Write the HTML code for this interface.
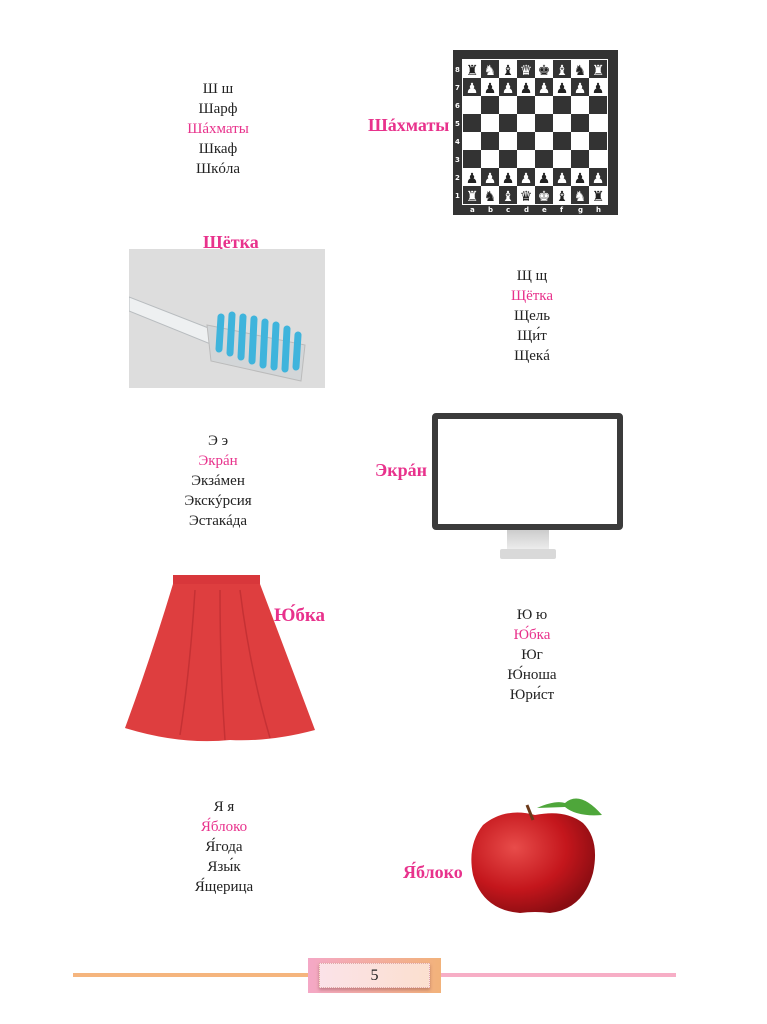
<!DOCTYPE html>
<html><head><meta charset="utf-8">
<style>
body{margin:0;width:767px;height:1024px;background:#fff;position:relative;overflow:hidden;font-family:"Liberation Serif",serif;}
.lst{position:absolute;width:200px;text-align:center;font-size:15px;line-height:20px;color:#222;}
.p{color:#e8328c;}
.lb{position:absolute;color:#e8328c;font-weight:bold;font-size:18px;line-height:20px;white-space:nowrap;}
.abs{position:absolute;}
</style></head><body>

<div class="lst" style="left:118px;top:79px">Ш ш<br>Шарф<br><span class="p">Шáхматы</span><br>Шкаф<br>Шкóла</div>
<div class="lb" style="left:368px;top:115px">Шáхматы</div>

<svg class="abs" style="left:453px;top:50px" width="165" height="165" viewBox="0 0 165 165">
<rect width="165" height="165" fill="#333"/>
<rect x="9" y="9" width="146" height="146" fill="#fff"/>
<g fill="#333">
<rect x="28" y="10" width="18" height="18"/><rect x="64" y="10" width="18" height="18"/><rect x="100" y="10" width="18" height="18"/><rect x="136" y="10" width="18" height="18"/>
<rect x="10" y="28" width="18" height="18"/><rect x="46" y="28" width="18" height="18"/><rect x="82" y="28" width="18" height="18"/><rect x="118" y="28" width="18" height="18"/>
<rect x="28" y="46" width="18" height="18"/><rect x="64" y="46" width="18" height="18"/><rect x="100" y="46" width="18" height="18"/><rect x="136" y="46" width="18" height="18"/>
<rect x="10" y="64" width="18" height="18"/><rect x="46" y="64" width="18" height="18"/><rect x="82" y="64" width="18" height="18"/><rect x="118" y="64" width="18" height="18"/>
<rect x="28" y="82" width="18" height="18"/><rect x="64" y="82" width="18" height="18"/><rect x="100" y="82" width="18" height="18"/><rect x="136" y="82" width="18" height="18"/>
<rect x="10" y="100" width="18" height="18"/><rect x="46" y="100" width="18" height="18"/><rect x="82" y="100" width="18" height="18"/><rect x="118" y="100" width="18" height="18"/>
<rect x="28" y="118" width="18" height="18"/><rect x="64" y="118" width="18" height="18"/><rect x="100" y="118" width="18" height="18"/><rect x="136" y="118" width="18" height="18"/>
<rect x="10" y="136" width="18" height="18"/><rect x="46" y="136" width="18" height="18"/><rect x="82" y="136" width="18" height="18"/><rect x="118" y="136" width="18" height="18"/>
</g>
<g font-family="DejaVu Sans" font-size="7" fill="#fff" font-weight="bold">
<text x="2" y="22">8</text><text x="2" y="40">7</text><text x="2" y="58">6</text><text x="2" y="76">5</text><text x="2" y="94">4</text><text x="2" y="112">3</text><text x="2" y="130">2</text><text x="2" y="148">1</text>
<text x="17" y="162">a</text><text x="35" y="162">b</text><text x="53" y="162">c</text><text x="71" y="162">d</text><text x="89" y="162">e</text><text x="107" y="162">f</text><text x="125" y="162">g</text><text x="143" y="162">h</text>
</g>
<g font-family="DejaVu Sans" font-size="14" text-anchor="middle">
<text x="19" y="25" fill="#222">♜</text><text x="37" y="25" fill="#fff">♞</text><text x="55" y="25" fill="#222">♝</text><text x="73" y="25" fill="#fff">♛</text><text x="91" y="25" fill="#222">♚</text><text x="109" y="25" fill="#fff">♝</text><text x="127" y="25" fill="#222">♞</text><text x="145" y="25" fill="#fff">♜</text>
<text x="19" y="43" fill="#fff">♟</text><text x="37" y="43" fill="#222">♟</text><text x="55" y="43" fill="#fff">♟</text><text x="73" y="43" fill="#222">♟</text><text x="91" y="43" fill="#fff">♟</text><text x="109" y="43" fill="#222">♟</text><text x="127" y="43" fill="#fff">♟</text><text x="145" y="43" fill="#222">♟</text>
<text x="19" y="133" fill="#222">♟</text><text x="37" y="133" fill="#fff">♟</text><text x="55" y="133" fill="#222">♟</text><text x="73" y="133" fill="#fff">♟</text><text x="91" y="133" fill="#222">♟</text><text x="109" y="133" fill="#fff">♟</text><text x="127" y="133" fill="#222">♟</text><text x="145" y="133" fill="#fff">♟</text>
<text x="19" y="151" fill="#fff">♜</text><text x="37" y="151" fill="#222">♞</text><text x="55" y="151" fill="#fff">♝</text><text x="73" y="151" fill="#222">♛</text><text x="91" y="151" fill="#fff">♚</text><text x="109" y="151" fill="#222">♝</text><text x="127" y="151" fill="#fff">♞</text><text x="145" y="151" fill="#222">♜</text>
</g>
</svg>

<div class="lb" style="left:203px;top:232px">Щётка</div>
<svg class="abs" style="left:129px;top:249px" width="196" height="139" viewBox="0 0 196 139">
<rect width="196" height="139" fill="#dddddd"/>
<path d="M0 48 L82 80 L84 96 L0 62 Z" fill="#eef0f1" stroke="#b8bcbf" stroke-width="1"/>
<path d="M78 76 L176 96 L172 132 L82 112 Z" fill="#d3d6d8" stroke="#bbb"/>
<g stroke="#3fb4dc" stroke-width="7" stroke-linecap="round">
<line x1="92" y1="68" x2="90" y2="100"/><line x1="103" y1="66" x2="101" y2="104"/><line x1="114" y1="68" x2="112" y2="108"/><line x1="125" y1="70" x2="123" y2="112"/><line x1="136" y1="73" x2="134" y2="116"/><line x1="147" y1="76" x2="145" y2="118"/><line x1="158" y1="80" x2="156" y2="120"/><line x1="169" y1="86" x2="167" y2="118"/>
</g>
</svg>
<div class="lst" style="left:432px;top:266px">Щ щ<br><span class="p">Щётка</span><br>Щель<br>Щи́т<br>Щекá</div>

<div class="lst" style="left:118px;top:431px">Э э<br><span class="p">Экрáн</span><br>Экзáмен<br>Экскýрсия<br>Эстакáда</div>
<div class="lb" style="left:375px;top:460px">Экрáн</div>
<div class="abs" style="left:432px;top:413px;width:179px;height:105px;border:6px solid #3b3b3b;border-radius:4px;background:#fff"></div>
<div class="abs" style="left:507px;top:530px;width:42px;height:20px;background:linear-gradient(#ccc,#eee)"></div>
<div class="abs" style="left:500px;top:549px;width:56px;height:10px;background:#d9d9d9;border-radius:2px"></div>

<svg class="abs" style="left:120px;top:570px" width="200" height="180" viewBox="0 0 200 180">
<path d="M53 5 L140 5 L140 14 L53 14 Z" fill="#d8373b"/>
<path d="M53 14 L140 14 Q165 80 195 160 Q150 172 110 170 Q60 175 5 158 Q30 90 53 14 Z" fill="#de3e3f"/>
<g stroke="#b52a2e" stroke-width="1.5" fill="none" opacity=".6"><path d="M75 20 Q70 100 60 165"/><path d="M100 20 Q100 100 105 170"/><path d="M120 20 Q130 100 150 168"/></g>
</svg>
<div class="lb" style="left:274px;top:606px;font-size:19px">Ю́бка</div>
<div class="lst" style="left:432px;top:605px">Ю ю<br><span class="p">Ю́бка</span><br>Юг<br>Ю́ноша<br>Юри́ст</div>

<div class="lst" style="left:124px;top:797px">Я я<br><span class="p">Я́блоко</span><br>Я́года<br>Язы́к<br>Я́щерица</div>
<div class="lb" style="left:403px;top:862px">Я́блоко</div>
<svg class="abs" style="left:465px;top:785px" width="145" height="135" viewBox="0 0 145 135">
<defs><radialGradient id="ap" cx=".35" cy=".35" r=".7"><stop offset="0" stop-color="#e84c4a"/><stop offset=".6" stop-color="#c4161c"/><stop offset="1" stop-color="#8a0d12"/></radialGradient></defs>
<path d="M70 30 Q40 22 18 40 Q2 60 8 90 Q18 125 55 128 Q70 126 85 128 Q118 124 128 88 Q135 55 118 38 Q100 24 70 30 Z" fill="url(#ap)"/>
<path d="M68 35 L62 20" stroke="#6b3a1a" stroke-width="3"/>
<path d="M72 23 Q90 15 100 18 Q115 5 137 30 Q112 32 100 22 Z" fill="#4ea63a"/>
</svg>

<div class="abs" style="left:73px;top:973px;width:238px;height:4px;background:#f5b57e"></div>
<div class="abs" style="left:438px;top:973px;width:238px;height:4px;background:#f7aec6"></div>
<div class="abs" style="left:308px;top:958px;width:133px;height:35px;background:linear-gradient(90deg,#f4a8c6,#f2b27a)"></div>
<div class="abs" style="left:319px;top:963px;width:109px;height:23px;background:linear-gradient(90deg,#fbe2e8,#fbe0cf);border:1px dotted #e0a8a8;box-shadow:0 2px 3px rgba(120,60,60,.4);text-align:center;font-size:16px;line-height:23px;color:#222">5</div>
</body></html>
